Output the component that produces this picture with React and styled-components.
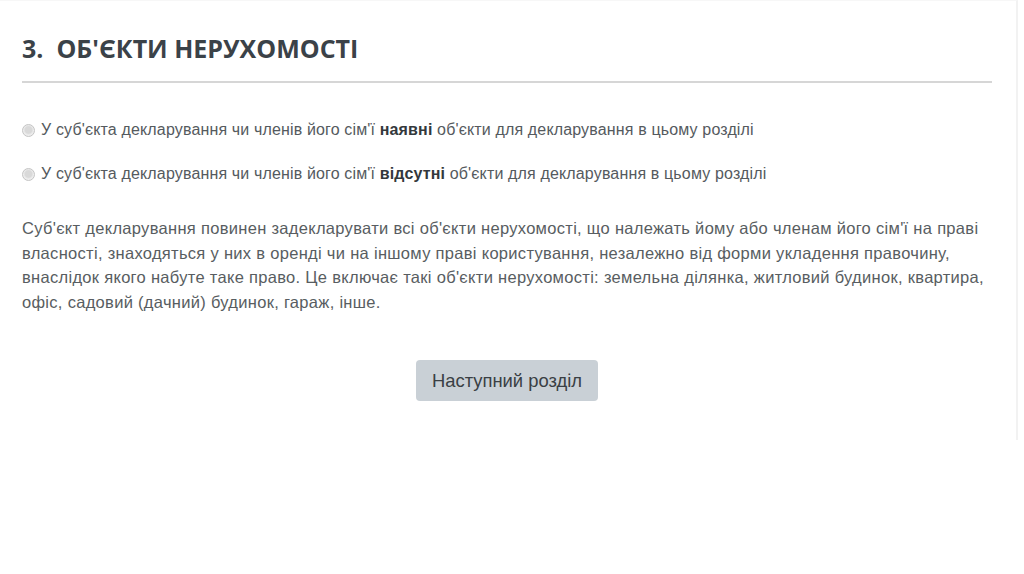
import React from "react";
import styled, { createGlobalStyle } from "styled-components";

const Global = createGlobalStyle`
  html, body { margin: 0; padding: 0; background: #ffffff; }
  body { font-family: "Liberation Sans", Arial, sans-serif; }
`;

const Frame = styled.div`
  width: 1018px;
  height: 440px;
  border-right: 2px solid #f2f2f2;
  border-top: 1px solid #f7f7f7;
  box-sizing: border-box;
  padding: 0 24px 0 22px;
`;

const Title = styled.h1`
  margin: 0;
  padding-top: 30px;
  padding-bottom: 16px;
  font-family: "Open Sans", sans-serif;
  font-weight: 700;
  font-size: 25px;
  line-height: 34px;
  color: #3b4248;
  border-bottom: 2px solid #d6d6d6;
  width: 970px;
`;

const Options = styled.div`
  display: flex;
  flex-direction: column;
  gap: 20px;
  margin-top: 35px;
`;

const Option = styled.label`
  display: flex;
  align-items: center;
  gap: 6px;
  font-size: 16px;
  letter-spacing: 0.15px;
  line-height: 24px;
  color: #555a5e;
`;

const Radio = styled.span`
  width: 11px;
  height: 11px;
  border-radius: 50%;
  border: 1px solid #c4c4c4;
  background: radial-gradient(circle at 50% 45%, #d9d9d9 0 40%, #ececec 60%, #f6f6f6 100%);
  flex: none;
`;

const Strong = styled.b`
  color: #33383c;
  font-weight: 700;
`;

const Paragraph = styled.p`
  margin: 30px 0 0;
  width: 972px;
  font-size: 16.5px;
  letter-spacing: 0.3px;
  line-height: 24.5px;
  color: #585d61;
`;

const Actions = styled.div`
  display: flex;
  justify-content: center;
  width: 970px;
  margin-top: 46px;
`;

const Button = styled.button`
  height: 41px;
  padding: 0 16px;
  border: none;
  border-radius: 4px;
  background: #c9d0d6;
  color: #3a3f44;
  font-family: "Liberation Sans", Arial, sans-serif;
  font-size: 18.4px;
`;

export default function App() {
  return (
    <>
      <Global />
      <Frame>
        <Title>3.&nbsp; ОБ'ЄКТИ НЕРУХОМОСТІ</Title>
        <Options>
          <Option>
            <Radio />
            <span>
              У суб'єкта декларування чи членів його сім'ї <Strong>наявні</Strong> об'єкти для декларування в цьому розділі
            </span>
          </Option>
          <Option>
            <Radio />
            <span>
              У суб'єкта декларування чи членів його сім'ї <Strong>відсутні</Strong> об'єкти для декларування в цьому розділі
            </span>
          </Option>
        </Options>
        <Paragraph>
          Суб'єкт декларування повинен задекларувати всі об'єкти нерухомості, що належать йому або членам його сім'ї на праві
          власності, знаходяться у них в оренді чи на іншому праві користування, незалежно від форми укладення правочину,
          внаслідок якого набуте таке право. Це включає такі об'єкти нерухомості: земельна ділянка, житловий будинок, квартира,
          офіс, садовий (дачний) будинок, гараж, інше.
        </Paragraph>
        <Actions>
          <Button>Наступний розділ</Button>
        </Actions>
      </Frame>
    </>
  );
}
